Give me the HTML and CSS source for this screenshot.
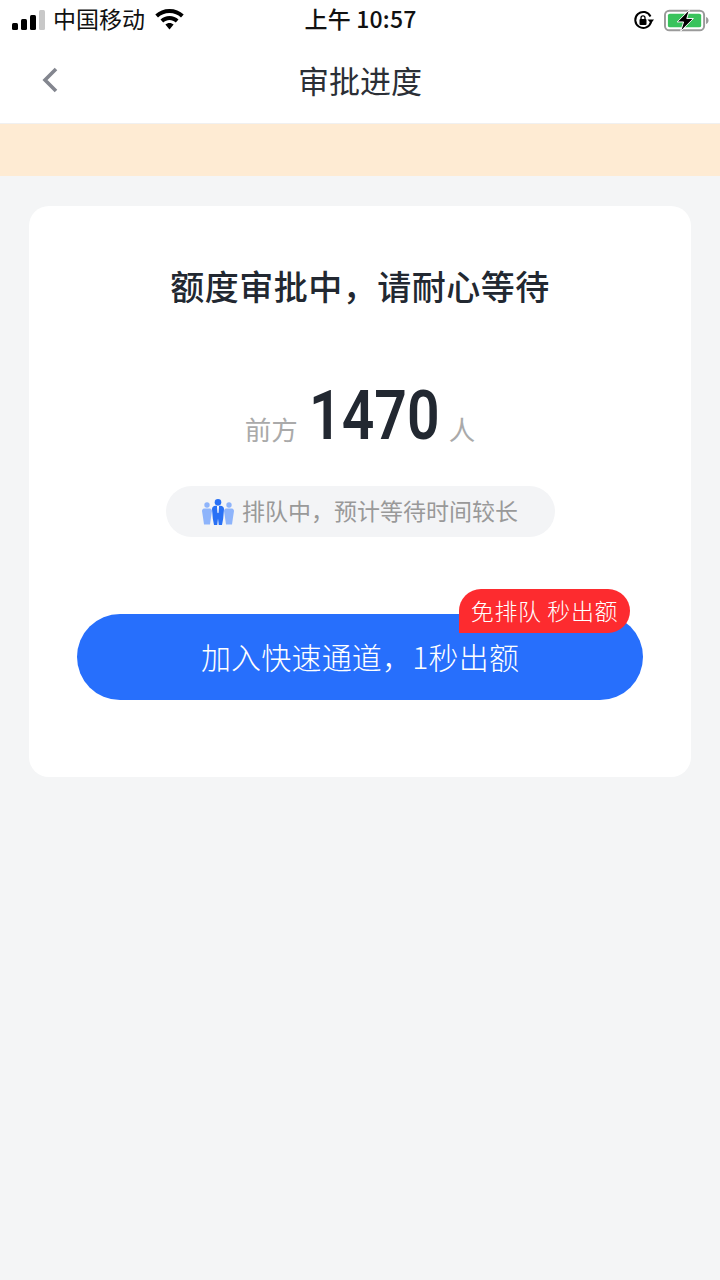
FILE: index.html
```html
<!DOCTYPE html>
<html lang="zh-CN">
<head>
  <meta charset="UTF-8">
  <title>审批进度</title>
  <link rel="stylesheet" href="styles.css">
</head>
<body>

  <div class="status-bar">
    <div class="status-left">
      <svg class="signal" width="33" height="20" viewBox="0 0 33 20">
        <rect x="0" y="13" width="6" height="7" rx="1.500" fill="#000"/>
        <rect x="9" y="9" width="6" height="11" rx="1.500" fill="#000"/>
        <rect x="18" y="5" width="6" height="15" rx="1.500" fill="#000"/>
        <rect x="27" y="0" width="6" height="20" rx="1.500" fill="#c8c8c8"/>
      </svg>
      <span class="carrier">中国移动</span>
      <svg class="wifi" width="29" height="21" viewBox="0 0 29 21">
        <path d="M14.500 0C9 0 4 2 0.300 5.500L3 8.400C6 5.600 10 4 14.500 4S23 5.600 26 8.400L28.700 5.500C25 2 20 0 14.500 0Z" fill="#000"/>
        <path d="M14.500 7C11 7 7.900 8.300 5.500 10.500L8.200 13.400C9.900 11.900 12.100 11 14.500 11S19.100 11.900 20.800 13.400L23.500 10.500C21.100 8.300 18 7 14.500 7Z" fill="#000"/>
        <path d="M14.500 14C12.900 14 11.500 14.600 10.400 15.600L14.500 20.500L18.600 15.600C17.500 14.600 16.100 14 14.500 14Z" fill="#000"/>
      </svg>
    </div>
    <div class="status-time">上午 10:57</div>
    <div class="status-right">
      <svg class="lock" width="21" height="21" viewBox="0 0 21 21">
        <path d="M17.500 6.500A8 8 0 1 0 18 12" fill="none" stroke="#000" stroke-width="2"/>
        <path d="M14.500 9.500L21 9.500L18 13.500Z" fill="#000"/>
        <rect x="6.500" y="9" width="7" height="6" rx="1" fill="#000"/>
        <path d="M8 9.500V7.800a2 2 0 0 1 4 0V9.500" fill="none" stroke="#000" stroke-width="1.300"/>
      </svg>
      <svg class="battery" width="45" height="23" viewBox="0 0 46 23">
        <rect x="1" y="1.500" width="40" height="20" rx="4.500" fill="#fff" stroke="#9a9a9a" stroke-width="2"/>
        <rect x="4" y="4.500" width="34" height="14" rx="2" fill="#39c35c"/>
        <path d="M43 8v7c1.500-.4 2.500-1.800 2.500-3.500S44.500 8.400 43 8Z" fill="#9a9a9a"/>
        <path d="M26 0.500L13.500 13H20L17 22.500L30 9.500H23.300Z" fill="#000" stroke="#fff" stroke-width="1"/>
      </svg>
    </div>
  </div>

  <header class="nav">
    <svg class="nav-back" width="18" height="26" viewBox="0 0 18 26">
      <path d="M15 2L4 13L15 24" fill="none" stroke="#83868f" stroke-width="3.600"/>
    </svg>
    <h1 class="nav-title">审批进度</h1>
  </header>

  <div class="notice"></div>

  <main class="card">
    <h2 class="card-title">额度审批中，请耐心等待</h2>

    <div class="queue">
      <span class="queue-label">前方</span>
      <span class="queue-num">1470</span>
      <span class="queue-label">人</span>
    </div>

    <div class="tip">
      <svg class="tip-icon" width="32" height="26" viewBox="0 0 32 26">
        <g fill="#8eb4fb">
          <circle cx="5" cy="6" r="2.700"/>
          <path d="M0 12c0-1.500 1-2.500 2.500-2.500h5c1.500 0 2.500 1 2.500 2.500L9 18.500 8 25.500H2L1 18.500Z"/>
          <circle cx="27" cy="6" r="2.700"/>
          <path d="M22 12c0-1.500 1-2.500 2.500-2.500h5c1.500 0 2.500 1 2.500 2.500L31 18.500 30 25.500H24L23 18.500Z"/>
        </g>
        <g fill="#2870f5">
          <circle cx="16" cy="3.300" r="3.300"/>
          <path d="M10 10c0-2 1.500-3.300 3.500-3.300h5c2 0 3.500 1.300 3.500 3.300l-.8 9.500-1.200 6.500h-3.200l-.8-6.500-.8 6.500h-3.200l-1.200-6.500Z"/>
        </g>
        <path d="M15 7h2l-.4 6.500-.6.800-.6-.8Z" fill="#fff"/>
      </svg>
      <span class="tip-text">排队中，预计等待时间较长</span>
    </div>

    <div class="action">
      <button class="action-btn" type="button">加入快速通道，1秒出额</button>
      <span class="action-badge">免排队 秒出额</span>
    </div>
  </main>

</body>
</html>
```

FILE: styles.css
```css
* {
  box-sizing: border-box;
}

body {
  margin: 0;
  min-height: 1280px;
  background-color: #f4f5f6;
  color: #222831;
  font-family: "Noto Sans CJK SC", "Noto Sans", sans-serif;
}

.status-bar {
  height: 40px;
  background-color: #fff;
  padding: 0 11px 0 12px;
  display: grid;
  grid-template-columns: 1fr auto 1fr;
  align-items: center;
  color: #111;
}

.status-left {
  display: flex;
  align-items: center;
}

.signal {
  margin-top: -1px;
}

.carrier {
  font-size: 23px;
  line-height: 36px;
  margin: -4px 0 0 8px;
}

.wifi {
  margin: -2px 0 0 10px;
}

.status-time {
  font-size: 23px;
  line-height: 36px;
  margin-top: -4px;
  font-weight: 500;
  letter-spacing: 0.2px;
}

.status-right {
  display: flex;
  align-items: center;
  justify-content: flex-end;
  gap: 10px;
}

.nav {
  height: 84px;
  background-color: #fff;
  border-bottom: 1px solid #f0f0f0;
  padding-bottom: 4px;
  display: flex;
  align-items: center;
  justify-content: center;
  position: relative;
}

.nav-back {
  position: absolute;
  left: 41px;
  top: 27px;
}

.nav-title {
  margin: 0;
  font-size: 31px;
  font-weight: 400;
  color: #2b2f36;
}

.notice {
  height: 52px;
  background-color: #feebd3;
}

.card {
  margin: 30px 29px 0;
  height: 571px;
  background-color: #fff;
  border-radius: 20px;
  padding-top: 55px;
}

.card-title {
  margin: 0;
  font-size: 34px;
  line-height: 50px;
  font-weight: 500;
  letter-spacing: 0.5px;
  text-align: center;
}

.queue {
  margin-top: 70px;
  height: 80px;
  display: flex;
  align-items: flex-end;
  justify-content: center;
}

.queue-label {
  font-size: 26.5px;
  line-height: 38px;
  margin-bottom: 13px;
  color: #aaa;
}

.queue-num {
  width: 130px;
  margin: 0 10px 5px 11px;
  font-family: Roboto, sans-serif;
  font-size: 68px;
  line-height: 80px;
  font-weight: 600;
  white-space: nowrap;
  transform: scaleX(0.84);
  transform-origin: left center;
}

.tip {
  width: 389px;
  height: 51px;
  margin: 25px auto 0;
  background-color: #f3f4f6;
  border-radius: 26px;
  display: flex;
  align-items: center;
  justify-content: center;
  gap: 8px;
  font-size: 23px;
  color: #999;
}

.tip-text {
  margin-top: -4px;
}

.action {
  margin: 77px 48px 0;
  position: relative;
}

.action-btn {
  display: block;
  width: 100%;
  height: 86px;
  padding: 0 0 3px;
  border: none;
  border-radius: 43px;
  background-color: #276ffc;
  color: #fff;
  font-family: inherit;
  font-size: 30px;
  font-weight: 300;
  letter-spacing: 0.2px;
}

.action-badge {
  position: absolute;
  right: 13px;
  top: -25px;
  height: 44px;
  width: 171px;
  border-radius: 22px 22px 22px 0;
  background-color: #fd2b2f;
  color: #fff;
  font-size: 23px;
  font-weight: 300;
  line-height: 42px;
  text-align: center;
  letter-spacing: 0.6px;
}
```
